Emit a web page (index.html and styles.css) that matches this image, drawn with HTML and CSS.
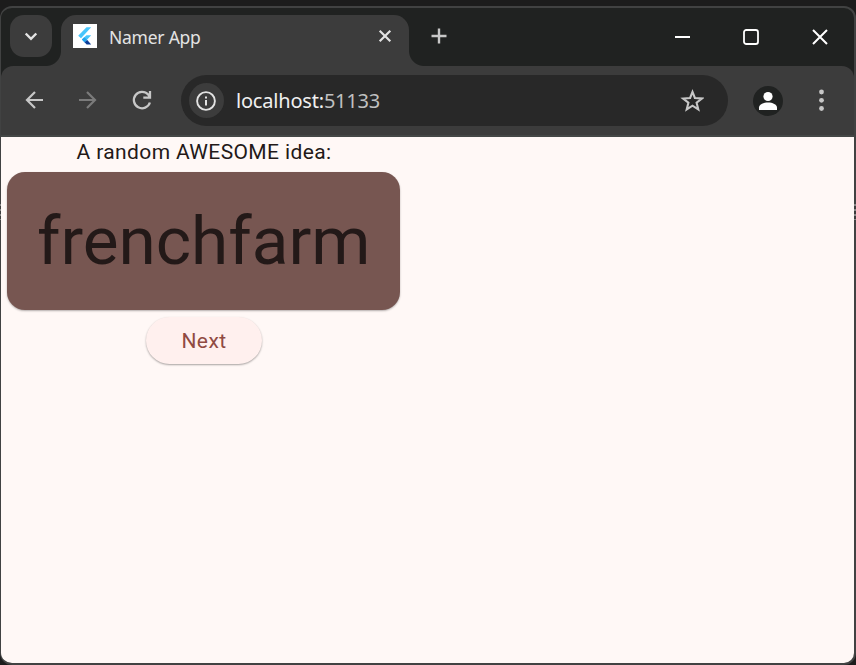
FILE: index.html
```html
<!DOCTYPE html>
<html lang="en">
<head>
<meta charset="utf-8">
<title>Namer App</title>
<link rel="stylesheet" href="styles.css">
</head>
<body>
<div class="window">
  <header class="tabstrip">
    <button class="tab-search" aria-label="Search tabs"><svg width="14" height="9" viewBox="0 0 14 9"><path d="M1.7 1.5 7 6.8l5.3-5.3" fill="none" stroke="#e3e3e3" stroke-width="2.4"/></svg></button>
    <div class="tab">
      <svg class="favicon" width="24" height="24" viewBox="0 0 24 24"><path fill="#fff" d="M0 0h24v24H0z"/><path fill="#47c5fb" d="M13.5 3.2h4.7L8 14.2l-2.8-2.5z"/><path fill="#47c5fb" d="M13.5 11.3h4.7l-4 4.2-3.4 1.5-2-1.4z"/><path fill="#22a4ed" d="m8.8 15.6 2.5-2.4 3 2.7-2.8 2.5z"/><path fill="#0b3d98" d="m11.5 18.2 2.8-2.3 3.9 4.5h-4.5z"/></svg>
      <span class="tab-title">Namer App</span>
      <svg class="tab-close" width="14" height="14" viewBox="0 0 14 14"><path d="m1.7 1.7 10.6 10.6m0-10.6L1.7 12.3" stroke="#e3e3e3" stroke-width="2.2"/></svg>
    </div>
    <svg class="new-tab" width="16" height="16" viewBox="0 0 16 16"><path d="M8 .5v15M.5 8h15" stroke="#c7c7c7" stroke-width="2.4"/></svg>
    <div class="controls">
      <svg width="16" height="16" viewBox="0 0 16 16"><path d="M1 8h15" stroke="#fff" stroke-width="2"/></svg>
      <svg width="16" height="16" viewBox="0 0 16 16"><rect x="1" y="1" width="14" height="14" rx="2.3" fill="none" stroke="#fff" stroke-width="1.8"/></svg>
      <svg width="16" height="16" viewBox="0 0 16 16"><path d="m1 1 14 14m0-14L1 15" stroke="#fff" stroke-width="2"/></svg>
    </div>
  </header>
  <nav class="toolbar">
    <div class="nav-buttons">
      <svg width="24" height="24" viewBox="0 0 24 24"><path d="M21 12H4.5m8.500-8-8 8 8 8" fill="none" stroke="#c7c7c7" stroke-width="2.2"/></svg>
      <svg width="24" height="24" viewBox="0 0 24 24"><path d="M3 12h16.500M11 4l8 8-8 8" fill="none" stroke="#7b7b7b" stroke-width="2.2"/></svg>
      <svg width="24" height="24" viewBox="0 0 24 24"><path d="M19.900 14.500A8.200 8.200 0 1 1 18.200 6.600L20 9M20 3v6.700h-6.700" fill="none" stroke="#c7c7c7" stroke-width="2.3"/></svg>
    </div>
    <div class="omnibox">
      <span class="site-info"><svg width="20" height="20" viewBox="0 0 20 20"><circle cx="10" cy="10" r="8.9" fill="none" stroke="#e3e3e3" stroke-width="1.9"/><path d="M10 8.900v5.600M10 5.500v2" stroke="#e3e3e3" stroke-width="2"/></svg></span>
      <span class="url">localhost:<span class="port">51133</span></span>
      <svg class="star" width="24" height="24" viewBox="0 0 24 24"><path d="m12.500 2.900 2.400 6.100 7 .5-5.300 4.200 1.700 6.700-5.800-3.700-5.800 3.700 1.700-6.700-5.300-4.200 7-.5z" fill="none" stroke="#c7c7c7" stroke-width="2.1"/></svg>
    </div>
    <svg class="profile" width="30" height="30" viewBox="0 0 30 30"><circle cx="15" cy="15" r="15" fill="#202221"/><circle cx="15" cy="10.500" r="4.600" fill="#fff"/><path d="M6 24v-2.500c0-3 4.500-5 9-5s9 2 9 5V24z" fill="#fff"/></svg>
    <svg class="menu" width="6" height="24" viewBox="0 0 6 24"><g fill="#c7c7c7"><circle cx="2.500" cy="4" r="2.400"/><circle cx="2.500" cy="12.300" r="2.400"/><circle cx="2.500" cy="20.500" r="2.400"/></g></svg>
  </nav>
  <main class="page">
    <div class="column">
      <p class="intro">A random AWESOME idea:</p>
      <div class="card">frenchfarm</div>
      <button class="next">Next</button>
    </div>
  </main>
</div>
<i class="grip grip-left"></i>
<i class="grip grip-right"></i>
</body>
</html>
```

FILE: styles.css
```css
* { box-sizing: border-box; }
body { position: relative; margin: 0; height: 665px; padding-top: 6px; background: #1c1c1c; overflow: hidden; }
svg { display: block; flex: none; }
button { border: 0; padding: 0; }
.window {
  width: 856px; height: 659px; overflow: hidden;
  display: flex; flex-direction: column;
  border: solid #414242; border-width: 2px 2px 2px 1px;
  border-radius: 12px; background: #202221;
}
.tabstrip { height: 58px; flex: none; display: flex; align-items: flex-start; }
.tab-search {
  position: relative; z-index: 1;
  width: 42px; height: 42px; margin: 7px 9px 0; border-radius: 14px; background: #3c3c3c;
  display: flex; align-items: center; justify-content: center;
}
.tab {
  position: relative; width: 348px; height: 51px; margin-top: 7px; padding: 9px 17px 0 12px;
  display: flex; align-items: flex-start; background: #3c3c3c; border-radius: 15px 15px 0 0;
}
.tab::before, .tab::after { content: ""; position: absolute; bottom: 0; width: 15px; height: 15px; }
.tab::before { left: -15px; background: radial-gradient(circle at 0 0, #202221 14.5px, #3c3c3c 15.5px); }
.tab::after { right: -15px; background: radial-gradient(circle at 100% 0, #202221 14.5px, #3c3c3c 15.5px); }
.tab-title {
  margin-left: 12px; flex: 1; color: #e3e3e3; white-space: nowrap;
  font: 17.5px/27px "Noto Sans", sans-serif; letter-spacing: -.25px;
}
.tab-close { margin-top: 5px; }
.new-tab { margin: 20px 0 0 22px; }
.controls { margin: 21px 26px 0 auto; display: flex; gap: 53px; }
.toolbar {
  height: 71px; flex: none; padding: 9px 29px 9px 21px; display: flex; align-items: flex-start;
  background: #3c3c3c; border-bottom: 2px solid #444746; border-radius: 12px 12px 0 0;
}
.nav-buttons { display: flex; gap: 30px; margin-top: 13px; margin-left: -.5px; }
.omnibox {
  width: 547px; height: 51px; margin-left: 27.5px; padding: 0 24.5px 0 7.5px;
  display: flex; align-items: center; border-radius: 26px; background: #282828;
}
.site-info {
  width: 35px; height: 35px; border-radius: 50%; background: #3c3c3c;
  display: flex; align-items: center; justify-content: center;
}
.url { margin-left: 12.5px; flex: 1; color: #f0f0f0; font: 20px/30px "Noto Sans", sans-serif; letter-spacing: -.2px; }
.port { color: #c0c0c0; }
.profile { margin: 11px 0 0 25px; }
.menu { margin: 13px 0 0 auto; }
.page { flex: 1; background: #fff8f6; }
.column { width: 405px; display: flex; flex-direction: column; align-items: center; font-family: Roboto, sans-serif; }
.intro { margin: 0 0 0 1px; color: #231918; font-size: 21px; line-height: 30px; letter-spacing: .375px; }
.card {
  margin: 5px 0 7px; width: 393px; height: 138px; padding: 30px; border-radius: 18px;
  background: #775651; color: #231918; font-size: 67.5px; line-height: 78px; white-space: nowrap;
  box-shadow: 0 1px 2px rgba(0,0,0,.3);
}
.next {
  width: 116px; height: 47px; padding-left: 1px; border-radius: 24px; background: #fff0ee; color: #904a42;
  font: 400 21px/48px Roboto, sans-serif; letter-spacing: .4px;
  box-shadow: 0 1px 2px rgba(0,0,0,.35);
}
.grip {
  position: absolute; top: 204px; width: 2px; height: 16px;
  background: repeating-linear-gradient(#858585 0 2px, #3c3c3c 2px 5px);
}
.grip-left { left: 0; width: 1px; }
.grip-right { right: 0; }
```
